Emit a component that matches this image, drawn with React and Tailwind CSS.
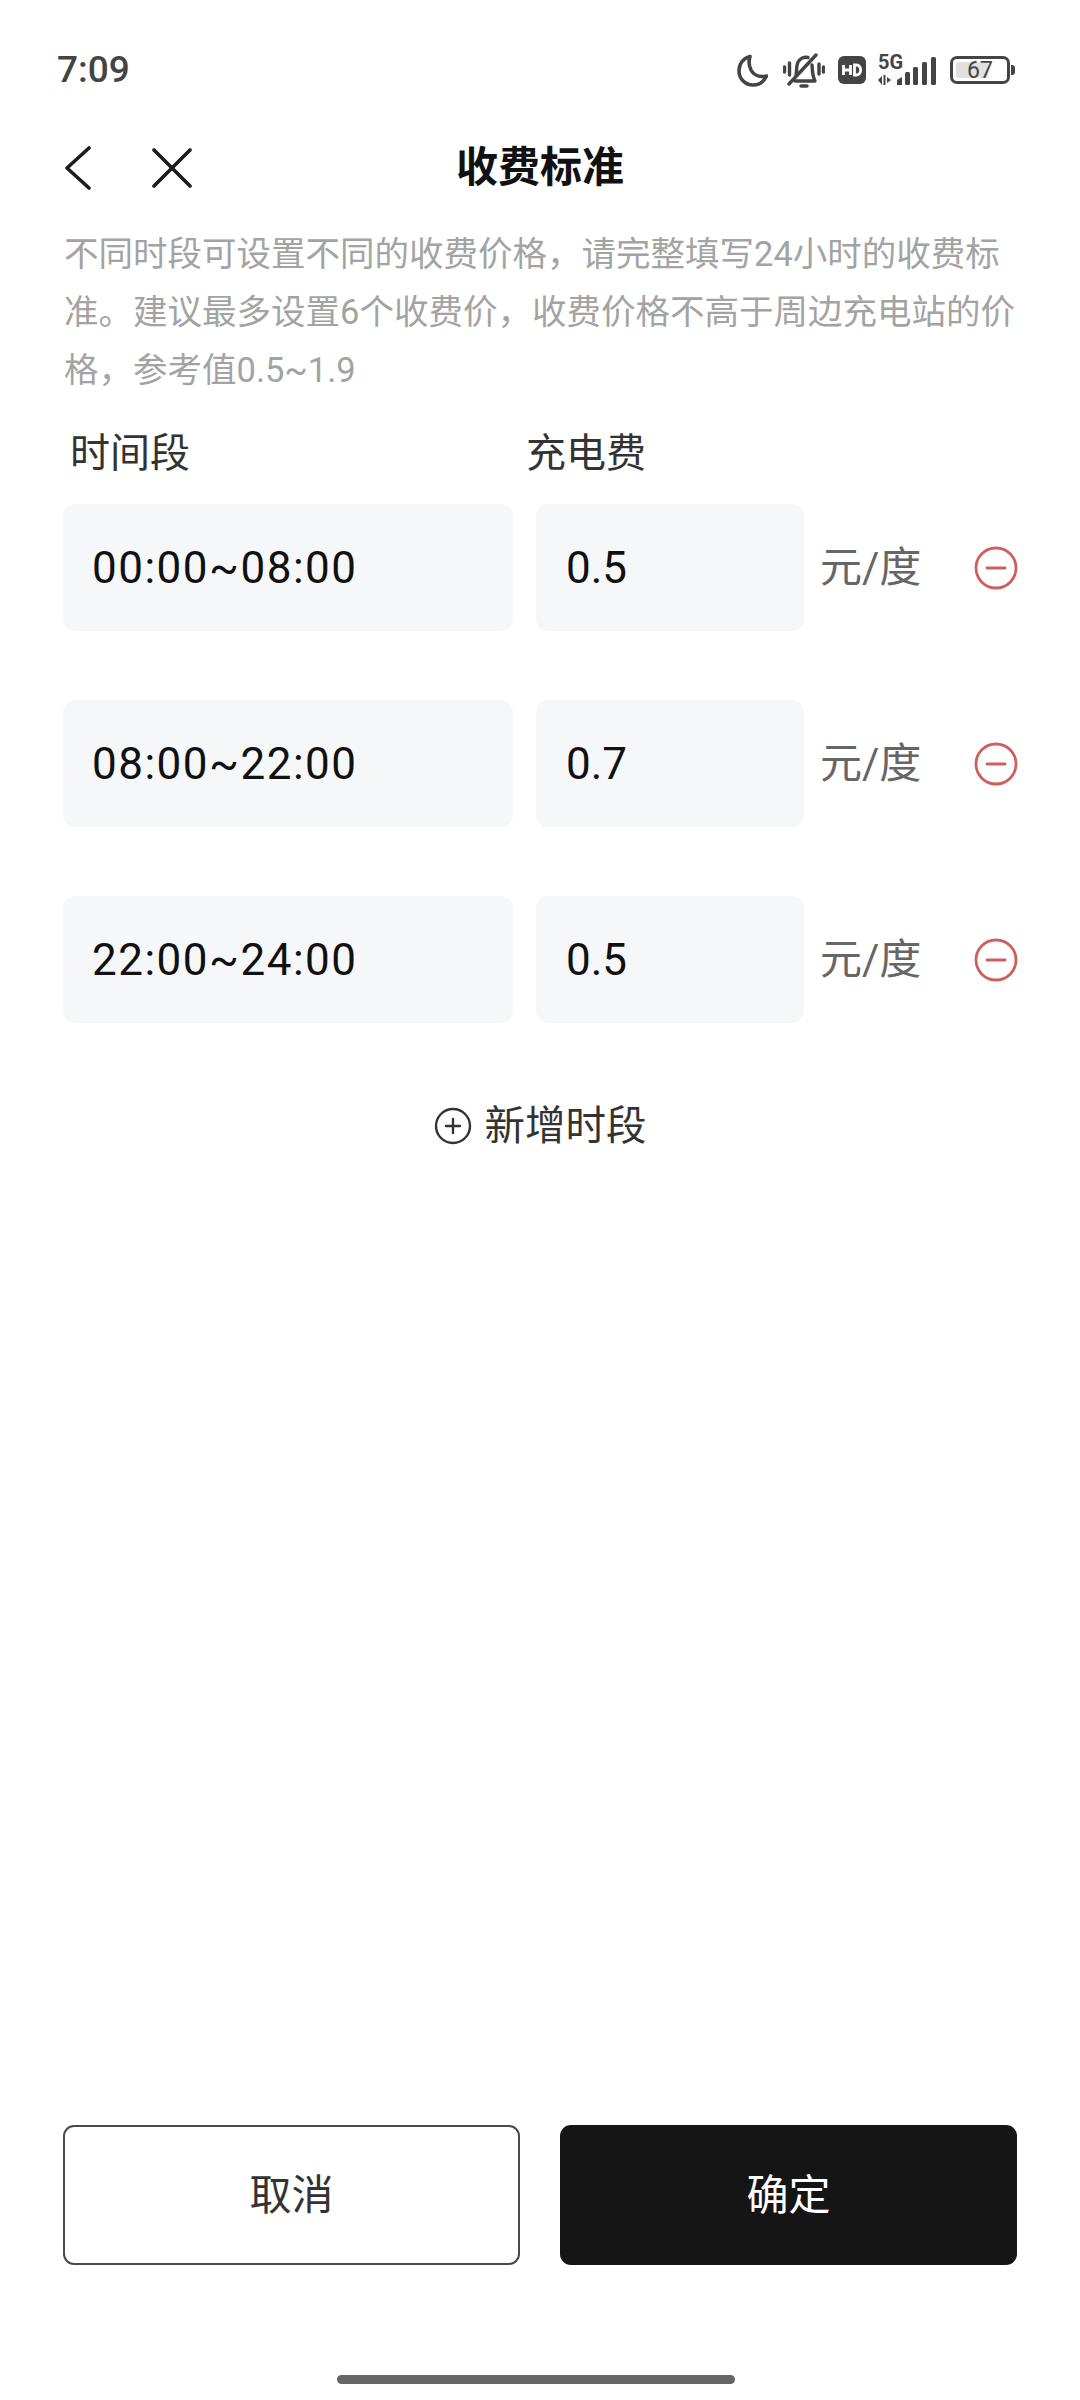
const FONT = "font-['Roboto','Noto_Sans_CJK_SC',sans-serif]";

const NOTE =
  "不同时段可设置不同的收费价格\uFF0C请完整填写24小时的收费标准。建议最多设置6个收费价\uFF0C收费价格不高于周边充电站的价格\uFF0C参考值0.5~1.9";

const rows = [
  { time: "00:00~08:00", price: "0.5" },
  { time: "08:00~22:00", price: "0.7" },
  { time: "22:00~24:00", price: "0.5" },
];

const StatusIcons = () => (
  <div className="flex items-center text-[#444444]">
    <svg width="31" height="33" viewBox="0 0 31 33" fill="none" stroke="currentColor" strokeWidth="3.6" strokeLinecap="round" strokeLinejoin="round">
      <path d="M13 2.500C6 4.500 2 10 2 17C2 25 8.500 31 16 31C22 31 27 27.500 29.500 22C23 23.500 17 21.500 14 16C11.800 11.500 11.500 7 13 2.500Z" />
    </svg>
    <svg className="ml-[15px]" width="42" height="35" viewBox="0 0 42 35" fill="none" stroke="currentColor" strokeWidth="3.400" strokeLinecap="round" strokeLinejoin="round">
      <path d="M13 22C14 18 13 13 15 9C17 5.500 21 3.500 25 4.500M29 12C29.500 17 29 22 32 28H12" />
      <path d="M33 2L6 31" />
      <path d="M18 33H24" />
      <path d="M1.500 14V19M6.500 10V22M36 11V21M40.500 14V19" />
    </svg>
    <svg className="ml-[13px]" width="28" height="28" viewBox="0 0 28 28">
      <rect width="28" height="28" rx="6" fill="currentColor" />
      <path d="M5.500 9V19M12.500 9V19M5.500 14H12.500" stroke="#fff" strokeWidth="2.800" fill="none" />
      <path d="M16.500 9V19H18.500C24 19 24 9 18.500 9Z" stroke="#fff" strokeWidth="2.800" fill="none" />
    </svg>
    <div className="relative ml-[12px] w-[60px] h-[30px]">
      <span className="absolute left-0 top-[-3px] text-[20px] leading-[20px] font-bold font-['Roboto',sans-serif]">5G</span>
      <svg className="absolute left-0 top-0" width="60" height="30" viewBox="0 0 60 30" fill="currentColor">
        <path d="M0 25L4 21V30ZM5.500 20H7.500V30H5.500ZM9 22L13 25L9 28Z" />
        <path d="M19 30V25L24 22V30Z" />
        <rect x="27" y="17" width="5" height="13" rx="1.500" />
        <rect x="35" y="12" width="5" height="18" rx="1.500" />
        <rect x="44" y="7" width="5" height="23" rx="1.500" />
        <rect x="53" y="2" width="5" height="28" rx="1.500" />
      </svg>
    </div>
    <div className="relative ml-[12px] w-[60px] h-[28px] rounded-[7px] border-[3px] border-[#444444] flex items-center justify-center overflow-hidden">
      <div className="absolute left-[3px] top-[3px] bottom-[3px] w-[32px] bg-[#e0e0e0] rounded-[2px]" />
      <span className={`relative text-[23px] leading-none text-[#444444] ${FONT}`}>67</span>
    </div>
    <div className="ml-[1px] w-[4px] h-[10px] rounded-r-[3px] bg-[#444444]" />
  </div>
);

const MinusCircle = () => (
  <svg width="44" height="44" viewBox="0 0 44 44" fill="none" stroke="#cf5f5c" strokeWidth="2.800" strokeLinecap="round">
    <circle cx="22" cy="22" r="20" />
    <path d="M13 22H31" />
  </svg>
);

const PlusCircle = () => (
  <svg width="38" height="38" viewBox="0 0 38 38" fill="none" stroke="#333333" strokeWidth="2.400" strokeLinecap="round">
    <circle cx="19" cy="19" r="17" />
    <path d="M19 12V26M12 19H26" />
  </svg>
);

const App = () => {
  return (
    <div className={`w-[1080px] h-[2400px] bg-white flex flex-col ${FONT}`}>
      <div className="h-[70px] mt-[35px] pl-[57px] pr-[65px] flex items-center justify-between">
        <span className="text-[37px] font-medium text-[#444444]">7:09</span>
        <StatusIcons />
      </div>

      <div className="relative h-[60px] mt-[32px] flex items-center justify-center">
        <div className="absolute left-[65px] top-[9px] flex items-center">
          <svg width="26" height="44" viewBox="0 0 26 44" fill="none" stroke="#1c1c1c" strokeWidth="3.600" strokeLinecap="round" strokeLinejoin="round">
            <path d="M24 2L2 22L24 42" />
          </svg>
          <svg className="ml-[61px]" width="40" height="40" viewBox="0 0 40 40" fill="none" stroke="#1c1c1c" strokeWidth="3.600" strokeLinecap="round">
            <path d="M2 2L38 38M38 2L2 38" />
          </svg>
        </div>
        <span className="text-[42px] font-bold text-[#111111]">收费标准</span>
      </div>

      <p className="mt-[28px] mx-[64px] w-[960px] text-[34.5px] leading-[58px] text-[#a3a3a3]">{NOTE}</p>

      <div className="mt-[25px] flex text-[40px] leading-[60px] text-[#333333]">
        <span className="ml-[70px] w-[456px]">时间段</span>
        <span>充电费</span>
      </div>

      <div className="mt-[20px] ml-[63px] flex flex-col gap-[69px]">
        {rows.map((row) => (
          <div key={row.time} className="flex items-center h-[127px]">
            <div className="w-[450px] h-full rounded-[12px] bg-[#f6f7f9] flex items-center pl-[29px] text-[44px] tracking-[1.500px] text-[#111111]">
              {row.time}
            </div>
            <div className="ml-[23px] w-[268px] h-full rounded-[12px] bg-[#f6f7f9] flex items-center pl-[30px] text-[44px] text-[#111111]">
              {row.price}
            </div>
            <span className="ml-[16px] text-[42px] text-[#666666]">元/度</span>
            <div className="ml-[53px]">
              <MinusCircle />
            </div>
          </div>
        ))}
      </div>

      <div className="mt-[73px] flex items-center justify-center">
        <PlusCircle />
        <span className="ml-[13px] text-[40.5px] text-[#333333]">新增时段</span>
      </div>

      <div className="flex-1" />

      <div className="mx-[63px] flex gap-[40px]">
        <button className="w-[459px] h-[140px] rounded-[11px] border-2 border-[#4a4a4a] bg-white text-[42px] text-[#333333]">
          取消
        </button>
        <button className="w-[459px] h-[140px] rounded-[11px] bg-[#151515] text-[42px] text-white">
          确定
        </button>
      </div>

      <div className="mt-[110px] mb-[16px] ml-[337px] w-[398px] h-[9px] rounded-full bg-[#666666]" />
    </div>
  );
};

export default App;
